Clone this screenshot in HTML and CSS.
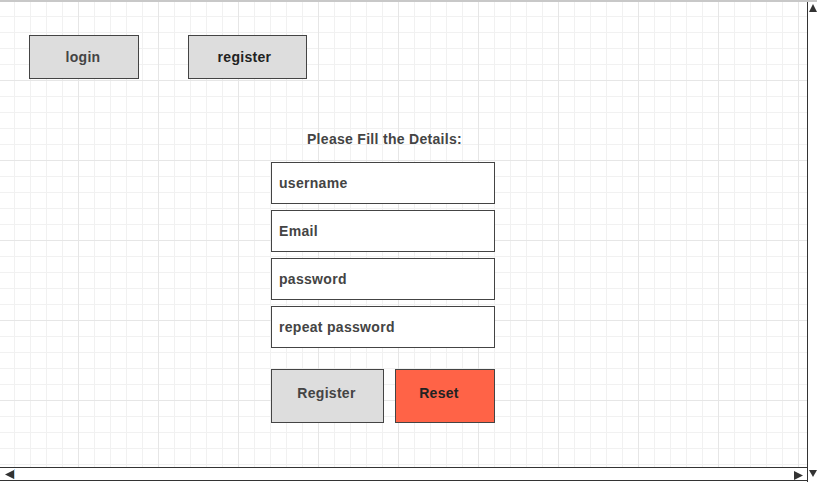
FILE: index.html
```html
<!DOCTYPE html>
<html>
<head>
<meta charset="utf-8">
<link rel="stylesheet" href="styles.css">
</head>
<body>
<div class="app">
  <div class="main">
    <div class="canvas">
      <div class="nav">
        <div class="btn btn-login">login</div>
        <div class="btn btn-register dark">register</div>
      </div>
      <div class="form">
        <div class="heading">Please Fill the Details:</div>
        <div class="fields">
          <div class="field">username</div>
          <div class="field">Email</div>
          <div class="field">password</div>
          <div class="field">repeat password</div>
        </div>
        <div class="actions">
          <div class="btn btn-submit">Register</div>
          <div class="btn btn-reset dark">Reset</div>
        </div>
      </div>
    </div>
    <div class="hbar">
      <svg class="arrow arrow-left" width="9" height="9" viewBox="0 0 9 9"><polygon points="9,0 9,9 0,4.5" fill="#333"/></svg>
      <span class="thumb-edge"></span>
      <span class="hbar-fill"></span>
      <svg class="arrow arrow-right" width="9" height="9" viewBox="0 0 9 9"><polygon points="0,0 9,4.5 0,9" fill="#333"/></svg>
    </div>
  </div>
  <div class="vbar">
    <svg class="arrow arrow-up" width="8" height="8" viewBox="0 0 8 8"><polygon points="4,0 8,8 0,8" fill="#333"/></svg>
    <svg class="arrow arrow-down" width="8" height="7" viewBox="0 0 8 7"><polygon points="0,0 8,0 4,7" fill="#333"/></svg>
  </div>
</div>
</body>
</html>
```
FILE: styles.css
```css
html, body {
  margin: 0;
  padding: 0;
  background: #fff;
}
body {
  width: 817px;
  height: 482px;
  overflow: hidden;
  font-family: "Liberation Sans", Arial, sans-serif;
}
.app {
  display: flex;
  height: 482px;
  box-sizing: border-box;
  border-top: 2px solid #c8c8c8;
}
.main {
  width: 807px;
  border-right: 1px solid #333;
  display: flex;
  flex-direction: column;
  height: 480px;
}
.canvas {
  height: 465px;
  box-sizing: border-box;
  padding: 33px 0 0 29px;
  background-color: #fff;
  background-image:
    linear-gradient(to right, #e6e6e6 1px, transparent 1px),
    linear-gradient(to bottom, #e6e6e6 1px, transparent 1px),
    linear-gradient(to right, #f1f1f1 1px, transparent 1px),
    linear-gradient(to bottom, #f1f1f1 1px, transparent 1px);
  background-size: 80px 80px, 80px 80px, 16px 16px, 16px 16px;
  background-position: 78px 78px, 78px 78px, 14px 14px, 14px 14px;
}
.nav {
  display: flex;
  gap: 49px;
}
.btn {
  box-sizing: border-box;
  border: 1px solid #444;
  background: #dddddd;
  display: flex;
  align-items: center;
  justify-content: center;
  font-weight: bold;
  font-size: 14px;
  letter-spacing: 0.3px;
  color: #444;
}
.btn.dark {
  color: #222;
}
.btn-login {
  width: 110px;
  height: 44px;
  padding-right: 2px;
}
.btn-register {
  width: 119px;
  height: 44px;
  padding-right: 6px;
}
.form {
  margin: 50px 0 0 242px;
  width: 224px;
  display: flex;
  flex-direction: column;
}
.heading {
  text-align: center;
  font-weight: bold;
  font-size: 14px;
  letter-spacing: 0.3px;
  line-height: 20px;
  color: #444;
  margin-bottom: 13px;
  padding-left: 3px;
}
.fields {
  display: flex;
  flex-direction: column;
  gap: 6px;
}
.field {
  box-sizing: border-box;
  height: 42px;
  border: 1px solid #444;
  background: #fff;
  display: flex;
  align-items: center;
  padding-left: 7px;
  font-weight: bold;
  font-size: 14px;
  letter-spacing: 0.3px;
  color: #444;
}
.actions {
  display: flex;
  gap: 11px;
  margin-top: 21px;
}
.btn-submit {
  width: 113px;
  height: 54px;
  padding: 0 2px 6px 0;
}
.btn-reset {
  width: 100px;
  height: 54px;
  background: #ff6347;
  padding: 0 12px 6px 0;
}
.hbar {
  box-sizing: border-box;
  height: 14px;
  border-top: 1px solid #333;
  border-bottom: 1px solid #333;
  display: flex;
  align-items: center;
  padding: 0 4px 0 5px;
}
.arrow {
  display: block;
  flex: none;
}
.thumb-edge {
  width: 1px;
  height: 10px;
  background: #a8d4f5;
}
.hbar-fill {
  flex: 1;
}
.arrow-right {
  margin-top: 2px;
}
.vbar {
  width: 9px;
  display: flex;
  flex-direction: column;
  justify-content: space-between;
  align-items: flex-start;
  padding-left: 1px;
  box-sizing: border-box;
}
.arrow-up {
  margin-top: 2px;
}
.arrow-down {
  margin-bottom: 5px;
}
```
